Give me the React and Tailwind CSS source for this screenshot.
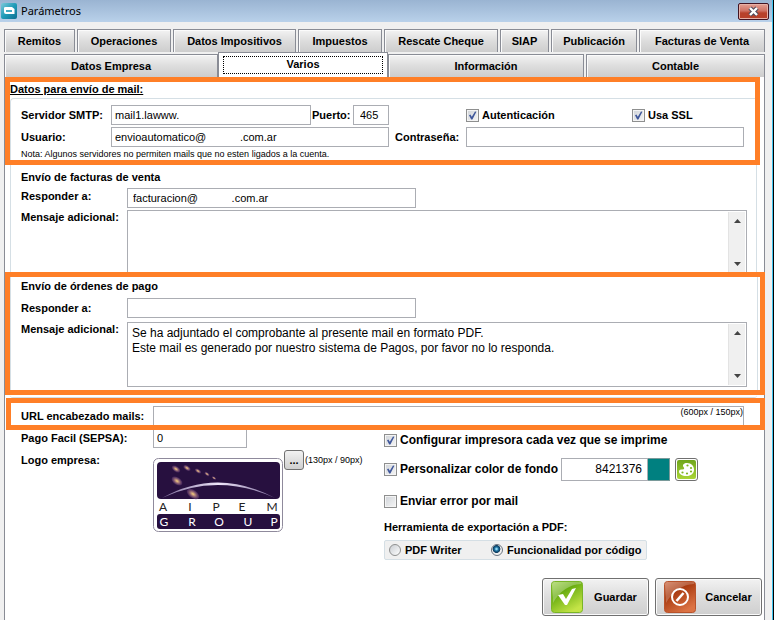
import React from "react";

const topTabs = [
  ["Remitos", "basis-[71px]"],
  ["Operaciones", "basis-[94px]"],
  ["Datos Impositivos", "basis-[123px]"],
  ["Impuestos", "basis-[84px]"],
  ["Rescate Cheque", "basis-[114px]"],
  ["SIAP", "basis-[49px]"],
  ["Publicación", "basis-[86px]"],
  ["Facturas de Venta", "basis-[126px]"],
];

const tabStyle =
  "h-[23px] shrink grow overflow-hidden whitespace-nowrap border border-b-0 border-[#898c95] bg-linear-to-b from-[#f3f3f3] from-0% via-[#dddddd] via-50% to-[#cdcdcd] to-100% text-center font-bold shadow-[inset_1px_1px_0_#fbfbfb]";

const field = "h-5 min-w-0 border border-[#abadb3] bg-white px-[3px] text-[11px] text-black outline-none";

function Tab({ label, basis }) {
  return (
    <button type="button" role="tab" aria-selected="false" className={`${tabStyle} ${basis}`}>
      {label}
    </button>
  );
}

function Check({ label, checked = false, size = "text-[11px]" }) {
  return (
    <label className={`flex items-center gap-[3px] whitespace-nowrap font-bold ${size}`}>
      <span className="relative block size-[13px] shrink-0">
        <input
          type="checkbox"
          defaultChecked={checked}
          className="peer block size-[13px] appearance-none border border-[#8e8f8f] bg-linear-to-br from-[#cfd3d8] to-[#f6f6f6] shadow-[inset_0_0_0_1px_#f4f4f4]"
        />
        <svg viewBox="0 0 13 13" className="pointer-events-none absolute inset-0 hidden size-[13px] peer-checked:block">
          <path d="M3 6.2 L4.4 5.4 L5.8 7.8 L9 2.4 L10.4 2.8 L6.4 10.4 L5.2 10.4 Z" fill="#3f579b" />
        </svg>
      </span>
      {label}
    </label>
  );
}

function Radio({ label, checked = false }) {
  return (
    <label className="flex items-center gap-1 whitespace-nowrap text-[11px] font-bold">
      <input
        type="radio"
        name="pdf"
        defaultChecked={checked}
        className="block size-3 shrink-0 appearance-none rounded-full border border-[#8e8f8f] bg-linear-to-br from-[#c9cdd2] to-white checked:border-[#6a7480] checked:bg-[radial-gradient(circle_at_45%_40%,#8fd8f4_0_8%,#1c6f9e_24%,#0d3a5c_44%,#f0f0f0_52%)]"
      />
      {label}
    </label>
  );
}

function MessageBox({ id, value, className }) {
  return (
    <div className={`flex grow border border-[#abadb3] bg-white p-px ${className}`}>
      <textarea
        id={id}
        defaultValue={value}
        className="block min-w-0 grow resize-none overflow-hidden px-[3px] py-[2px] text-[12px] leading-[15px] outline-none"
      />
      <div className="flex w-[17px] flex-col items-center justify-between border-l border-[#e3e3e3] bg-[#f0f0f0] py-[7px]">
        <svg width="7" height="4" viewBox="0 0 7 4"><path d="M0 4 L3.5 0 L7 4Z" fill="#444" /></svg>
        <svg width="7" height="4" viewBox="0 0 7 4"><path d="M0 0 L3.5 4 L7 0Z" fill="#444" /></svg>
      </div>
    </div>
  );
}

function CompanyLogo() {
  const dots = [
    [23, 11, 4.6, 2.6], [34, 10, 4, 2.2], [45, 13, 3.4, 1.8], [54, 16, 2.8, 1.5],
    [61, 20, 2.4, 1.2], [24, 23, 6, 3.6], [40, 36, 7, 4],
  ];
  const letter = { fontFamily: "Lato, sans-serif", fontSize: 12 };
  return (
    <svg width="130" height="74" viewBox="0 0 130 74" className="block" role="img" aria-label="AIPEM GROUP">
      <defs>
        <radialGradient id="star">
          <stop offset="0" stopColor="#f6d27c" />
          <stop offset="0.4" stopColor="#a97c78" />
          <stop offset="1" stopColor="#54306b" stopOpacity="0.6" />
        </radialGradient>
        <linearGradient id="arc">
          <stop offset="0" stopColor="#7d6b9b" />
          <stop offset="0.5" stopColor="#efe6fa" />
          <stop offset="1" stopColor="#7d6b9b" />
        </linearGradient>
      </defs>
      <rect x="0.5" y="0.5" width="129" height="73" rx="5" fill="#fff" stroke="#8f8a9c" />
      <rect x="4" y="4" width="123" height="37" rx="4" fill="#27103f" />
      {dots.map(([x, y, rx, ry]) => (
        <ellipse key={`${x}-${y}`} cx={x} cy={y} rx={rx} ry={ry} transform={`rotate(35 ${x} ${y})`} fill="url(#star)" />
      ))}
      <path d="M9 40 Q64 9 122 40 Q64 14 9 40Z" fill="url(#arc)" />
      <rect x="4" y="56" width="123" height="15" rx="3" fill="#27103f" />
      <g style={letter} fill="#222" textAnchor="middle">
        <text x="10" y="53">A</text>
        <text x="37" y="53">I</text>
        <text x="63" y="53">P</text>
        <text x="89" y="53">E</text>
        <text x="119" y="53">M</text>
      </g>
      <g style={letter} fill="#fff" textAnchor="middle">
        <text x="11" y="68">G</text>
        <text x="39" y="68">R</text>
        <text x="66" y="68">O</text>
        <text x="95" y="68">U</text>
        <text x="121" y="68">P</text>
      </g>
    </svg>
  );
}

function ActionButton({ label, children }) {
  return (
    <button
      type="button"
      className="flex h-[38px] w-[107px] items-center rounded-[3px] border border-[#707070] bg-linear-to-b from-[#f2f2f2] from-0% via-[#dddddd] via-50% to-[#cfcfcf] to-100% pl-2 font-bold shadow-[inset_0_0_0_1px_#fafafa]"
    >
      {children}
      <span className="grow text-center">{label}</span>
    </button>
  );
}

export default function App() {
  return (
    <div className="flex min-h-screen flex-col border-r border-black bg-[#f0f0f0] font-['Liberation_Sans',Arial,sans-serif] text-[11px] leading-[14px] text-black">
      <div className="flex grow flex-col border-r border-[#3fc4ee]">
        <header className="flex h-[22px] items-center bg-linear-to-b from-[#9ab4d2] to-[#b9d1ea] pl-px pr-[3px]">
          <svg width="16" height="16" viewBox="0 0 16 16">
            <defs>
              <linearGradient id="app" x2="1" y2="1">
                <stop offset="0" stopColor="#7fc9da" />
                <stop offset="0.5" stopColor="#1f9bb8" />
                <stop offset="1" stopColor="#0b6f91" />
              </linearGradient>
            </defs>
            <rect width="16" height="16" rx="2" fill="url(#app)" />
            <path d="M3 5 Q3 4 4.500 4 H11 L13.500 6 V11 H5 Q3 11 3 9Z" fill="#fff" />
            <rect x="5" y="7" width="6" height="2" fill="#43aac4" />
          </svg>
          <h1 className="grow pl-1 font-['Noto_Sans',sans-serif] text-[11px]">Parámetros</h1>
          <button
            type="button"
            aria-label="Cerrar"
            className="flex h-[17px] w-[31px] items-center justify-center rounded-[2px] border border-[#431422] bg-linear-to-b from-[#e3a095] from-0% via-[#cf7264] via-45% to-[#b8412b] to-60% shadow-[inset_0_0_0_1px_#e7b0a6]"
          >
            <svg width="13" height="11" viewBox="0 0 13 11">
              <path d="M3 2 L10 9 M10 2 L3 9" stroke="#4b4b5c" strokeWidth="4.400" />
              <path d="M3 2 L10 9 M10 2 L3 9" stroke="#fff" strokeWidth="2.400" />
            </svg>
          </button>
        </header>

        <div className="flex grow flex-col pl-1 pr-[7px] pt-[7px]">
          <nav role="tablist" aria-label="Secciones">
            <div className="flex gap-[2px]">
              {topTabs.map(([label, basis]) => (
                <Tab key={label} label={label} basis={basis} />
              ))}
            </div>
            <div className="flex items-end">
              <Tab label="Datos Empresa" basis="basis-[214px]" />
              <button
                type="button"
                role="tab"
                aria-selected="true"
                className="h-[25px] shrink grow basis-[170px] border border-b-0 border-[#898c95] bg-white px-1 py-[3px] font-bold"
              >
                <span className="block h-full border border-dotted border-black">Varios</span>
              </button>
              <Tab label="Información" basis="basis-[196px]" />
              <span className="w-[2px]" />
              <Tab label="Contable" basis="basis-[179px]" />
            </div>
          </nav>

          <main className="flex grow flex-col border-x border-[#898c95] bg-white">
            <section className="mr-1 border-[5px] border-[#ff7f27]">
              <h2 className="h-4 font-bold underline">Datos para envío de mail:</h2>
              <div className="flex flex-col gap-[2px] rounded-tl border-l border-t border-[#d5dfe5] pl-[10px] pr-[11px] pt-[6px]">
                <div className="flex items-center">
                  <label htmlFor="smtp" className="w-[90px] font-bold">Servidor SMTP:</label>
                  <div className="flex w-[278px] items-center">
                    <input id="smtp" defaultValue="mail1.lawww." className={`${field} w-[200px]`} />
                    <label htmlFor="port" className="w-[42px] pl-px font-bold">Puerto:</label>
                    <input id="port" defaultValue="465" className={`${field} grow basis-0 pl-[6px]`} />
                  </div>
                  <div className="flex grow pl-[77px]">
                    <div className="w-[166px]"><Check label="Autenticación" checked /></div>
                    <Check label="Usa SSL" checked />
                  </div>
                </div>
                <div className="flex items-center">
                  <label htmlFor="user" className="w-[90px] font-bold">Usuario:</label>
                  <input id="user" defaultValue="envioautomatico@           .com.ar" className={`${field} w-[278px]`} />
                  <label htmlFor="pass" className="w-[77px] pl-[6px] font-bold">Contraseña:</label>
                  <input id="pass" type="password" className={`${field} grow basis-0`} />
                </div>
                <p className="h-[11px] text-[9px] leading-[11px]">
                  Nota: Algunos servidores no permiten mails que no esten ligados a la cuenta.
                </p>
              </div>
            </section>

            <section className="ml-[5px] mr-[7px] border-x border-[#d5dfe5] pl-[10px] pr-[9px] pt-[5px]">
              <h3 className="h-[18px] font-bold">Envío de facturas de venta</h3>
              <div className="flex">
                <label htmlFor="reply1" className="w-[106px] pt-px font-bold">Responder a:</label>
                <input id="reply1" defaultValue="facturacion@           .com.ar" className={`${field} w-[289px] pl-[5px]`} />
              </div>
              <div className="flex h-[64px] overflow-hidden pt-[2px]">
                <label htmlFor="msg1" className="w-[106px] whitespace-nowrap font-bold">Mensaje adicional:</label>
                <MessageBox id="msg1" value="" className="h-[65px]" />
              </div>
            </section>

            <section className="-mr-px border-[5px] border-[#ff7f27]">
              <div className="mr-[2px] border-x border-[#d5dfe5] pb-[3px] pl-[10px] pr-[10px] pt-[2px]">
                <h3 className="h-[19px] font-bold">Envío de órdenes de pago</h3>
                <div className="flex items-center">
                  <label htmlFor="reply2" className="w-[106px] font-bold">Responder a:</label>
                  <input id="reply2" className={`${field} w-[289px]`} />
                </div>
                <div className="flex pt-1">
                  <label htmlFor="msg2" className="w-[106px] whitespace-nowrap font-bold">Mensaje adicional:</label>
                  <MessageBox
                    id="msg2"
                    className="h-[65px]"
                    value={
                      "Se ha adjuntado el comprobante al presente mail en formato PDF.\nEste mail es generado por nuestro sistema de Pagos, por favor no lo responda."
                    }
                  />
                </div>
              </div>
            </section>
            <div className="ml-[5px] mr-[7px] h-[3px] shrink-0 rounded-b border-b border-[#d5dfe5]" />

            <section className="-mr-px ml-px border-[5px] border-[#ff7f27]">
              <div className="flex items-end pl-[10px] pr-4 pt-[3px]">
                <label htmlFor="url" className="w-[132px] self-center font-bold">URL encabezado mails:</label>
                <div className="flex grow items-start border border-b-0 border-[#abadb3]">
                  <input id="url" className="h-[18px] min-w-0 grow px-1 outline-none" />
                  <span className="whitespace-nowrap text-[9px] leading-[11px]">(600px / 150px)</span>
                </div>
              </div>
            </section>

            <div className="flex pl-4">
              <div className="w-[363px]">
                <div className="flex">
                  <label htmlFor="sepsa" className="w-[132px] pt-px font-bold">Pago Facil (SEPSA):</label>
                  <input id="sepsa" defaultValue="0" className="h-[18px] w-[94px] border border-t-0 border-[#abadb3] px-[3px] pb-px outline-none" />
                </div>
                <div className="flex pt-[2px]">
                  <span className="w-[132px] pt-[3px] font-bold">Logo empresa:</span>
                  <div className="pt-2"><CompanyLogo /></div>
                  <button type="button" aria-label="Elegir logo" className="ml-px flex size-5 items-center justify-center rounded-[3px] border border-[#707070] bg-linear-to-b from-[#f2f2f2] to-[#cfcfcf] font-bold">
                    ...
                  </button>
                  <span className="whitespace-nowrap pl-px pt-[3px] text-[9px]">(130px / 90px)</span>
                </div>
              </div>
              <div className="flex flex-col items-start pt-[3px]">
                <Check label="Configurar impresora cada vez que se imprime" size="text-[12px]" checked />
                <div className="mt-[10px] flex h-6 items-center">
                  <div className="w-[177px]"><Check label="Personalizar color de fondo" size="text-[12px]" checked /></div>
                  <input
                    aria-label="Color de fondo"
                    defaultValue="8421376"
                    className="h-[23px] w-[87px] border border-[#abadb3] px-[5px] text-right text-[12px] outline-none"
                  />
                  <span className="h-[23px] w-[22px] border border-l-0 border-[#7a9a9a] bg-[#008080]" />
                  <button type="button" aria-label="Elegir color" className="ml-[5px] flex size-[23px] items-center justify-center rounded-[3px] border border-[#707070] bg-white">
                    <svg width="19" height="19" viewBox="0 0 19 19">
                      <defs>
                        <linearGradient id="pal" x2="0" y2="1">
                          <stop offset="0" stopColor="#6fa51c" />
                          <stop offset="1" stopColor="#a9d536" />
                        </linearGradient>
                      </defs>
                      <rect width="19" height="19" rx="2" fill="url(#pal)" />
                      <path d="M10 3 C14.500 3 17 6 17 9.500 C17 13.500 14 16 9.500 16 C5 16 2 14 2 11.500 C2 9.500 4 9.500 5.500 9.500 C7.500 9.500 7.500 8 6.500 7 C5 5 7 3 10 3Z" fill="#fff" />
                      <g fill="#7fb522">
                        <circle cx="10.500" cy="5.500" r="1.100" />
                        <circle cx="14" cy="8" r="1.100" />
                        <circle cx="14" cy="11.500" r="1.100" />
                        <circle cx="10" cy="13.500" r="1.100" />
                        <circle cx="5.500" cy="12.500" r="1.100" />
                      </g>
                    </svg>
                  </button>
                </div>
                <div className="pt-[13px]"><Check label="Enviar error por mail" size="text-[12px]" /></div>
                <fieldset className="pt-3">
                  <legend className="float-left w-full font-bold">Herramienta de exportación a PDF:</legend>
                  <div className="clear-both flex pt-[6px]">
                    <div className="flex h-5 w-[263px] items-center rounded-[2px] border border-[#d5dfe5] bg-[#f0f0f0] pl-1">
                      <div className="w-[102px]"><Radio label="PDF Writer" /></div>
                      <Radio label="Funcionalidad por código" checked />
                    </div>
                  </div>
                </fieldset>
              </div>
            </div>

            <footer className="flex justify-end gap-[6px] pb-1 pr-[2px] pt-[18px]">
              <ActionButton label="Guardar">
                <svg width="32" height="32" viewBox="0 0 32 32">
                  <defs>
                    <linearGradient id="ok" x2="0.600" y2="1">
                      <stop offset="0" stopColor="#a3d355" />
                      <stop offset="0.4" stopColor="#69ad10" />
                      <stop offset="1" stopColor="#c4e447" />
                    </linearGradient>
                  </defs>
                  <rect x="0.500" y="0.500" width="31" height="31" rx="3" fill="url(#ok)" stroke="#79b526" />
                  <path d="M1 3 Q1 1 3 1 H29 Q31 1 30 3 Q12 4 2 22Z" fill="#fff" opacity="0.28" />
                  <path d="M7 14 L12 13 L15 18 L21 8 L25 7 L16 24 L14 24Z" fill="#fff" />
                </svg>
              </ActionButton>
              <ActionButton label="Cancelar">
                <svg width="32" height="32" viewBox="0 0 32 32">
                  <defs>
                    <linearGradient id="no" x2="0.600" y2="1">
                      <stop offset="0" stopColor="#cf7450" />
                      <stop offset="0.4" stopColor="#a83a10" />
                      <stop offset="1" stopColor="#dc7344" />
                    </linearGradient>
                  </defs>
                  <rect x="0.500" y="0.500" width="31" height="31" rx="3" fill="url(#no)" stroke="#b8532c" />
                  <path d="M1 3 Q1 1 3 1 H29 Q31 1 30 3 Q12 4 2 22Z" fill="#fff" opacity="0.22" />
                  <circle cx="16" cy="16" r="8" fill="none" stroke="#fff" strokeWidth="2" />
                  <path d="M12.500 20 L19.500 12" stroke="#fff" strokeWidth="2.500" />
                </svg>
              </ActionButton>
            </footer>
          </main>
        </div>
      </div>
    </div>
  );
}
